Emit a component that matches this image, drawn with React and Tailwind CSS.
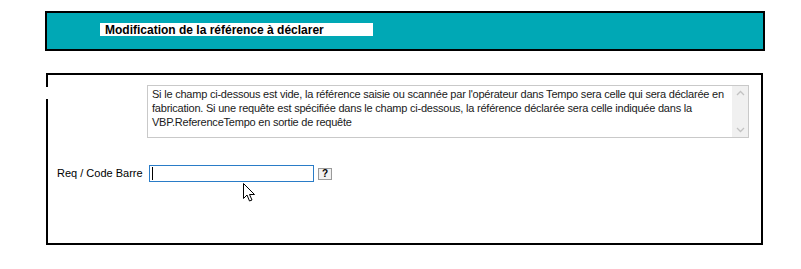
import React from 'react'

function Cursor() {
    return (
        <svg className="absolute left-[243px] top-[183px]" width="14" height="20" viewBox="0 0 14 20">
            <path d="M0.5 0.5 L0.5 15.5 L4 12 L6.5 18 L9 17 L6.5 11.5 L11.5 11.5 Z" fill="#fff" stroke="#000" strokeWidth="1" />
        </svg>
    )
}

export default function App() {
    return (
        <div className="relative w-[801px] h-[269px] bg-white font-['Liberation_Sans',Arial,sans-serif] text-[11px] text-black overflow-hidden">
            <div className="pt-[11px] pl-[45px]">
                <div className="w-[720px] h-[40px] border-2 border-black bg-[#00a8b5] pt-[10px] pl-[53px]">
                    <div className="w-[273px] h-[13px] bg-white pl-[5px] font-bold text-[12px] leading-[14px] whitespace-nowrap">
                        Modification de la référence à déclarer
                    </div>
                </div>
            </div>

            <div className="pl-[46px] pt-[22px]">
                <div className="relative w-[717px] h-[172px] border-2 border-black">
                    {/* break in the left frame */}
                    <div className="absolute -left-[2px] top-[12px] w-[2px] h-[12px] bg-white" />

                    <div className="ml-[99px] mt-[10px] w-[602px] h-[53px] border border-[#c9c9c9] flex">
                        <div className="flex-1 pl-[4px] pt-[1px] leading-[14px] text-[#1a1a1a] whitespace-nowrap tracking-[-0.22px]">
                            Si le champ ci-dessous est vide, la référence saisie ou scannée par l'opérateur dans Tempo sera celle qui sera déclarée en<br />
                            fabrication. Si une requête est spécifiée dans le champ ci-dessous, la référence déclarée sera celle indiquée dans la<br />
                            VBP.ReferenceTempo en sortie de requête
                        </div>
                        <div className="w-[16px] bg-[#f0f0f0] flex flex-col justify-between items-center py-[4px]">
                            <svg width="9" height="6" viewBox="0 0 9 6"><path d="M1 5 L4.5 1.5 L8 5" fill="none" stroke="#c2c2c2" strokeWidth="1.3" /></svg>
                            <svg width="9" height="6" viewBox="0 0 9 6"><path d="M1 1 L4.5 4.5 L8 1" fill="none" stroke="#c2c2c2" strokeWidth="1.3" /></svg>
                        </div>
                    </div>

                    <div className="flex items-center mt-[27px] ml-[9px]">
                        <span className="w-[92px] leading-[13px]">Req / Code Barre</span>
                        <div className="w-[165px] h-[17px] border border-[#2a7cc7] bg-white flex items-center pl-[2px]">
                            <div className="w-px h-[13px] bg-black" />
                        </div>
                        <div className="ml-[4px] w-[14px] h-[12px] border border-[#9a9a9a] bg-[#f0f0f0] flex items-center justify-center font-bold text-[10px] leading-none">?</div>
                    </div>
                </div>
            </div>

            <Cursor />
        </div>
    )
}
